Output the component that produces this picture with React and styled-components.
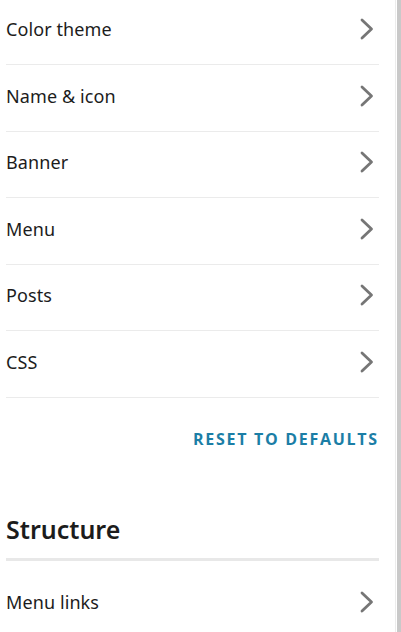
import React from 'react'
import styled, { createGlobalStyle } from 'styled-components'

const Global = createGlobalStyle`
  html, body {
    margin: 0;
    padding: 0;
    background: #fff;
    overflow: hidden;
  }
`

const Page = styled.div`
  width: 401px;
  height: 632px;
  display: flex;
  overflow: hidden;
  font-family: "Noto Sans", "Open Sans", sans-serif;
`

const Panel = styled.div`
  flex: 1;
  padding: 0 16px 0 6px;
  border-right: 1px solid #ececec;
`

const Rail = styled.div`
  width: 4px;
  margin-left: 1px;
  background: #c9c9c9;
`

const List = styled.div`
  display: flex;
  flex-direction: column;
  margin-top: ${props => props.offset || 0}px;
`

const Row = styled.div`
  display: flex;
  align-items: center;
  justify-content: space-between;
  border-bottom: ${props => (props.last ? 'none' : '1px solid #ebebeb')};
  padding-bottom: 4px;
  box-sizing: border-box;
  height: 66.5px;
`

const Label = styled.span`
  font-size: 18px;
  color: #1c1c1c;
  letter-spacing: 0.1px;
`

const Chevron = styled.svg`
  width: 14px;
  height: 22px;
  margin-right: 5px;
  flex-shrink: 0;
`

const Actions = styled.div`
  display: flex;
  justify-content: flex-end;
  padding: 21px 2px 0 0;
  height: 62px;
  box-sizing: border-box;
`

const ResetButton = styled.button`
  border: none;
  background: none;
  padding: 0;
  font-family: "Open Sans", "Noto Sans", sans-serif;
  font-weight: 700;
  font-size: 16px;
  letter-spacing: 1.7px;
  margin-right: -1.7px;
  color: #1b7ea6;
  line-height: 20px;
  cursor: pointer;
`

const SectionTitle = styled.h2`
  margin: 54px 0 0;
  font-size: 25px;
  font-weight: 600;
  color: #1c1c1c;
  line-height: 30px;
  padding-bottom: 14px;
  border-bottom: 3px solid #e8e8e8;
`

const ArrowIcon = () => (
  <Chevron viewBox="0 0 14 22">
    <path d="M2 2 L11.5 11 L2 20" fill="none" stroke="#767676" strokeWidth="2.8" strokeLinecap="round" strokeLinejoin="round" />
  </Chevron>
)

const appearance = ['Color theme', 'Name & icon', 'Banner', 'Menu', 'Posts', 'CSS']

export default function App() {
  return (
    <Page>
      <Global />
      <Panel>
        <List offset={-1.5}>
          {appearance.map(item => (
            <Row key={item}>
              <Label>{item}</Label>
              <ArrowIcon />
            </Row>
          ))}
        </List>
        <Actions>
          <ResetButton>RESET TO DEFAULTS</ResetButton>
        </Actions>
        <SectionTitle>Structure</SectionTitle>
        <List offset={10}>
          <Row last>
            <Label>Menu links</Label>
            <ArrowIcon />
          </Row>
        </List>
      </Panel>
      <Rail />
    </Page>
  )
}
